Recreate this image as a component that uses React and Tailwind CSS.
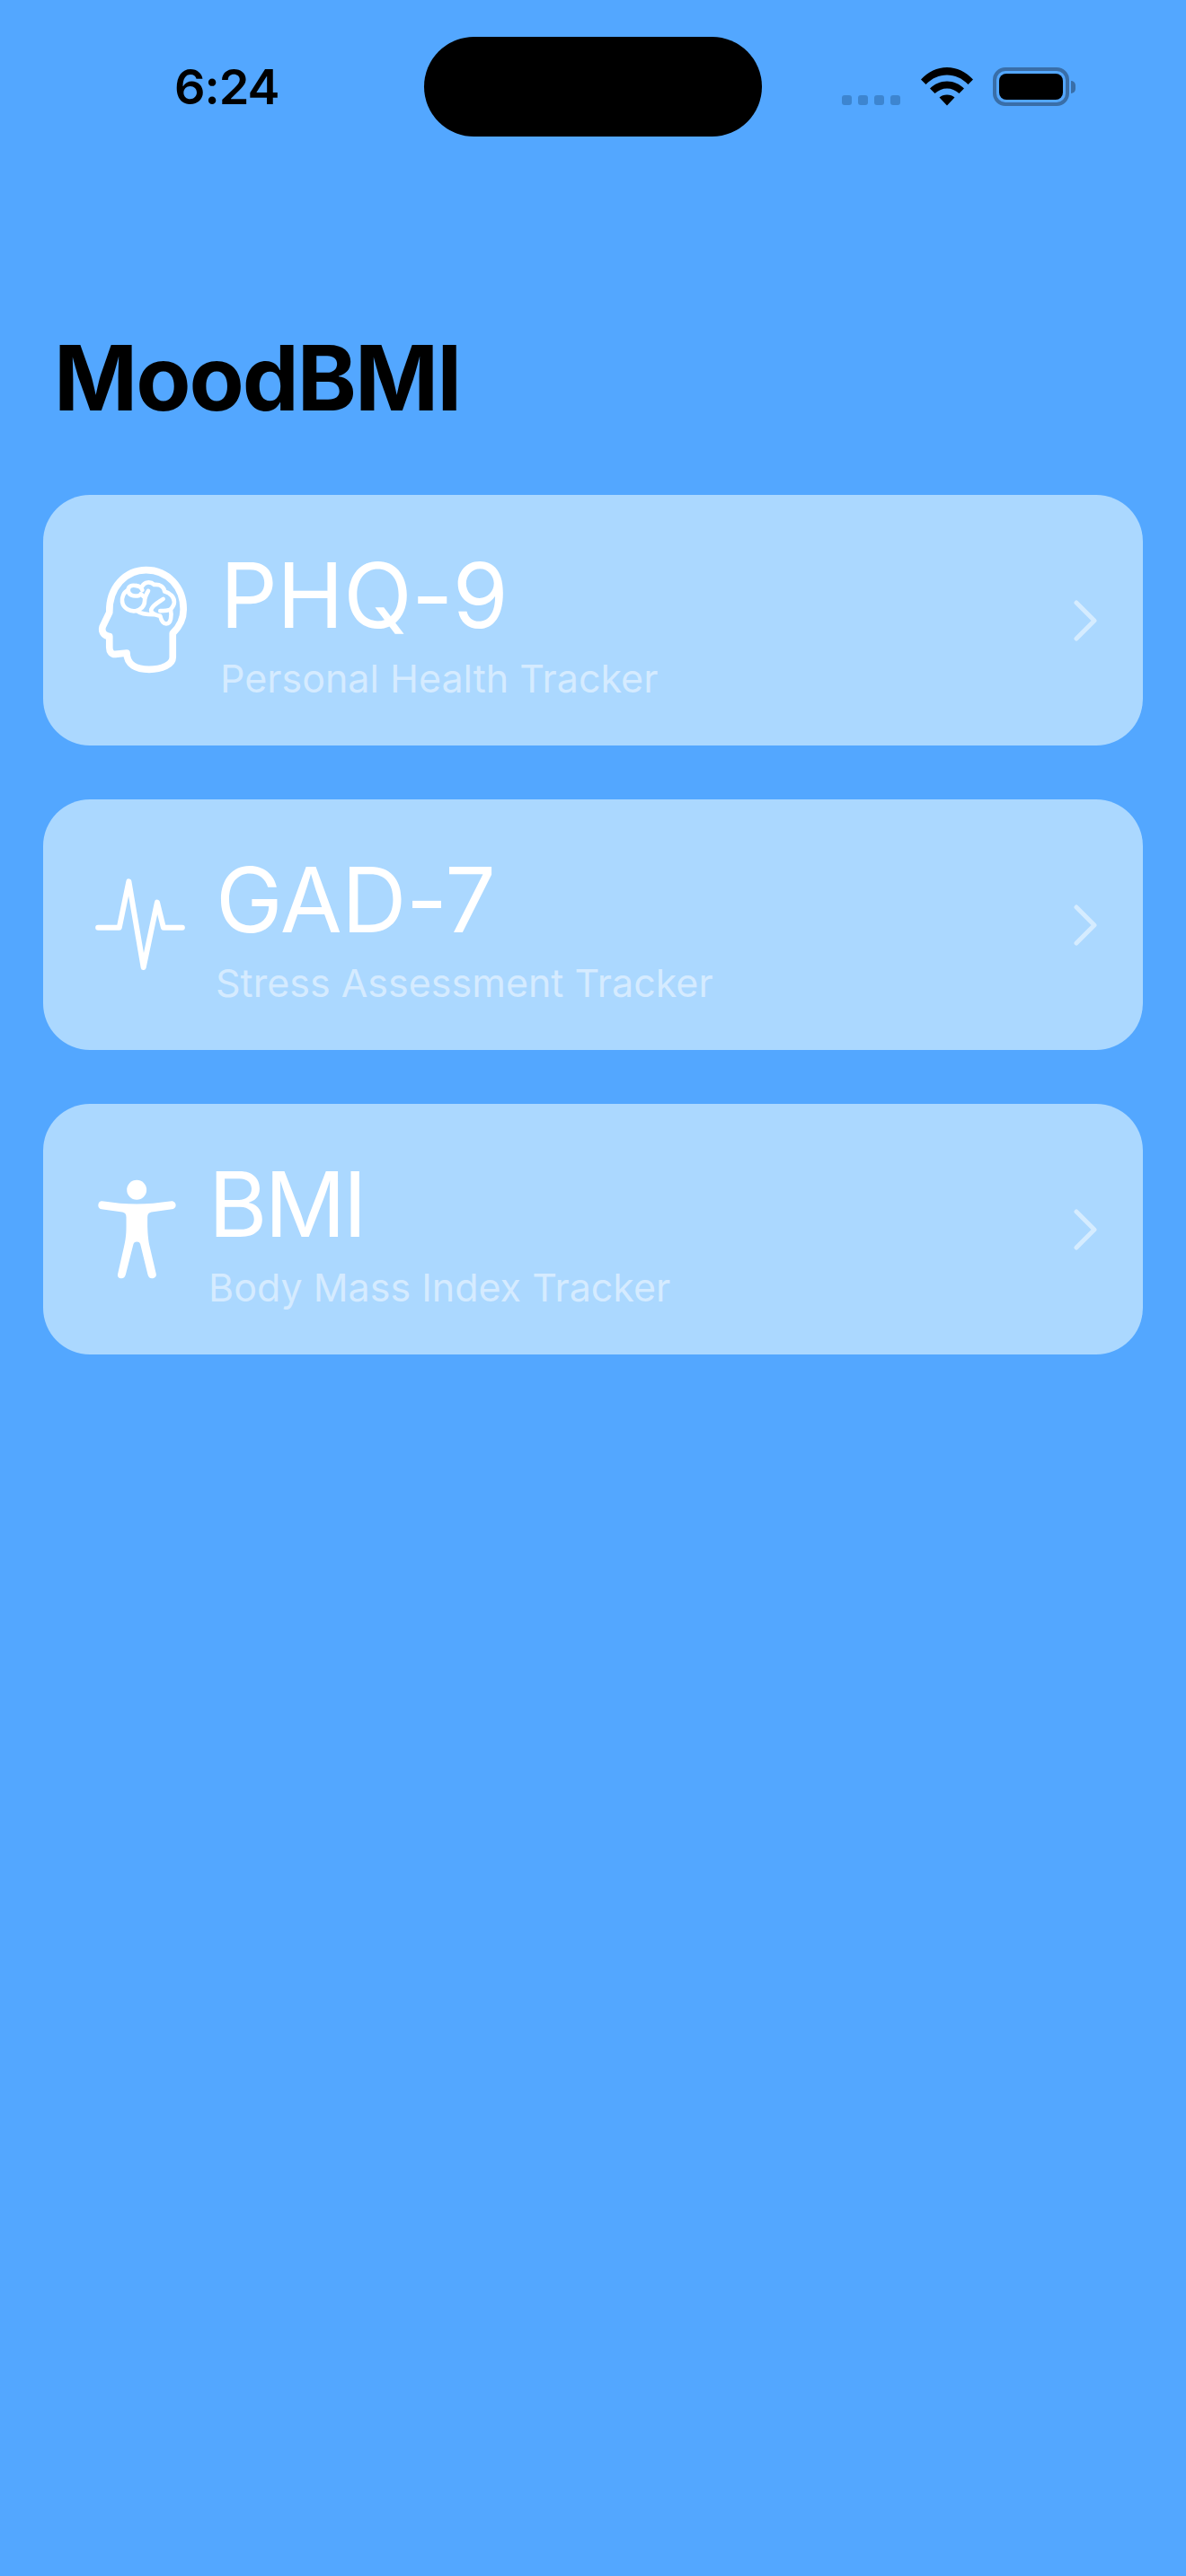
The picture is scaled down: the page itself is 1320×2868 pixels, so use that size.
import React from "react";

const font = { fontFamily: "Inter, 'Liberation Sans', sans-serif" };

function Brain() {
	return (
		<svg viewBox="234 274 306 364" className="ml-[2px] w-[102px] h-[121px] shrink-0" fill="none" stroke="white" strokeLinecap="round" strokeLinejoin="round">
			<path strokeWidth="23" d="M275 430C273 345 330 288 398 288C470 288 523 345 523 420C523 452 510 478 487 500L487 580C487 605 450 621 408 621C365 621 333 605 333 566L295 570C283 571 275 562 275 548L275 510C262 509 246 500 252 478Z" />
			<path strokeWidth="14" d="M375 373C355 378 338 372 338 355C338 342 350 338 362 340C372 341 382 345 385 355M385 342C392 328 412 325 425 337C445 335 458 345 460 360C480 365 492 380 492 395C492 405 486 413 480 420C484 440 482 468 465 468C452 468 448 455 445 442C425 438 412 430 415 420C420 405 440 395 455 385" />
			<path strokeWidth="14" d="M338 355C322 362 316 380 318 395C322 418 345 427 362 425C380 422 393 408 393 392C393 378 400 368 405 358M380 368L393 380M368 425C380 435 400 437 425 437M445 425C458 425 470 425 480 420" />
		</svg>
	);
}

function Pulse() {
	return (
		<svg viewBox="228 298 300 310" className="w-[100px] h-[103px] shrink-0" fill="none" stroke="white" strokeWidth="18" strokeLinecap="round" strokeLinejoin="round">
			<path d="M237 463L308 463L340 308L389 596L435 378L456 463L519 463" />
		</svg>
	);
}

function Figure() {
	return (
		<svg viewBox="236 284 262 332" className="ml-[3px] w-[87px] h-[111px] shrink-0" fill="white">
			<circle cx="366" cy="318" r="33" />
			<path d="M250 356C290 362 330 366 366 366C400 366 440 362 483 356C492 356 497 364 497 370C497 378 490 382 484 383L415 393C406 395 402 400 402 410L402 440C403 470 405 490 410 510L431 600C433 610 425 615 417 615C410 615 405 610 403 602L378 500C375 490 358 490 355 500L329 602C327 610 322 615 315 615C305 615 300 608 303 598L323 510C328 490 331 470 331 440L331 410C331 400 327 395 318 393L248 383C240 382 236 375 237 368C238 360 244 355 250 356Z" />
		</svg>
	);
}

function Chevron() {
	return (
		<svg viewBox="0 0 26 46" className="w-[26px] h-[46px] ml-auto shrink-0" fill="none" stroke="white" strokeOpacity="0.5" strokeWidth="5" strokeLinecap="round" strokeLinejoin="round">
			<path d="M3 3L23 23L3 43" />
		</svg>
	);
}

function Wifi() {
	return (
		<svg viewBox="0 0 58 43" className="w-[58px] h-[43px]" fill="black">
			<path d="M0 13.5C8 5 18 0 29 0C40 0 50 5 58 13.5L52.5 19C45.5 12 38 8.500 29 8.500C20 8.500 12.500 12 5.500 19Z" />
			<path d="M10 23.500C15 18.500 21.500 15.500 29 15.500C36.500 15.500 43 18.500 48 23.500L42.500 29C38.500 25.500 34 23.500 29 23.500C24 23.500 19.500 25.500 15.500 29Z" />
			<path d="M20.500 33.500C22.500 31.500 25.500 30.500 29 30.500C32.500 30.500 35.500 31.500 37.500 33.500L29 42.500Z" />
		</svg>
	);
}

function Card({ icon, title, sub, gap, track }) {
	return (
		<div className={"flex items-center h-[279px] rounded-[52px] bg-[#abd8ff] pl-[58px] pr-[51px] " + gap}>
			<div className="flex items-center h-[125px]">{icon}</div>
			<div className="flex flex-col mt-[12px]">
				<div className={"text-[100px] leading-[100px] text-white font-normal " + track}>{title}</div>
				<div className="text-[43px] leading-[52px] mt-[16px] text-white/50 font-normal">{sub}</div>
			</div>
			<Chevron />
		</div>
	);
}

export default function App() {
	return (
		<div className="min-h-[2868px] bg-[#53a7ff] text-black" style={font}>
			{/* status bar */}
			<div className="flex items-start pt-[41px] pl-[194px]">
				<div className="w-[113px] mt-[29px] text-[54px] leading-[54px] font-semibold tracking-[-1px]">6:24</div>
				<div className="w-[376px] h-[111px] ml-[165px] rounded-[56px] bg-black" />
				<div className="flex gap-[7px] ml-[89px] mt-[65px]">
					<div className="w-[11px] h-[11px] rounded-[3px] bg-[#3d85d0]" />
					<div className="w-[11px] h-[11px] rounded-[3px] bg-[#3d85d0]" />
					<div className="w-[11px] h-[11px] rounded-[3px] bg-[#3d85d0]" />
					<div className="w-[11px] h-[11px] rounded-[3px] bg-[#3d85d0]" />
				</div>
				<div className="ml-[23px] mt-[34px]">
					<Wifi />
				</div>
				<div className="flex items-center ml-[22px] mt-[34px]">
					<div className="w-[85px] h-[43px] rounded-[14px] border-[4px] border-[#396ea8] p-[3px]">
						<div className="w-full h-full rounded-[8px] bg-black" />
					</div>
					<div className="w-[5px] h-[14px] ml-[2px] rounded-r-full bg-[#396ea8]" />
				</div>
			</div>

			<h1 className="mt-[214px] pl-[60px] text-[100px] leading-[110px] font-bold tracking-[-2px]">MoodBMI</h1>

			<div className="flex flex-col gap-[60px] mt-[75px] mx-[48px]">
				<Card icon={<Brain />} gap="gap-[35px]" track="tracking-[-0.5px]" title="PHQ-9" sub="Personal Health Tracker" />
				<Card icon={<Pulse />} gap="gap-[34px]" track="tracking-[-0.5px]" title="GAD-7" sub="Stress Assessment Tracker" />
				<Card icon={<Figure />} gap="gap-[36px]" track="tracking-[-3px]" title="BMI" sub="Body Mass Index Tracker" />
			</div>
		</div>
	);
}
